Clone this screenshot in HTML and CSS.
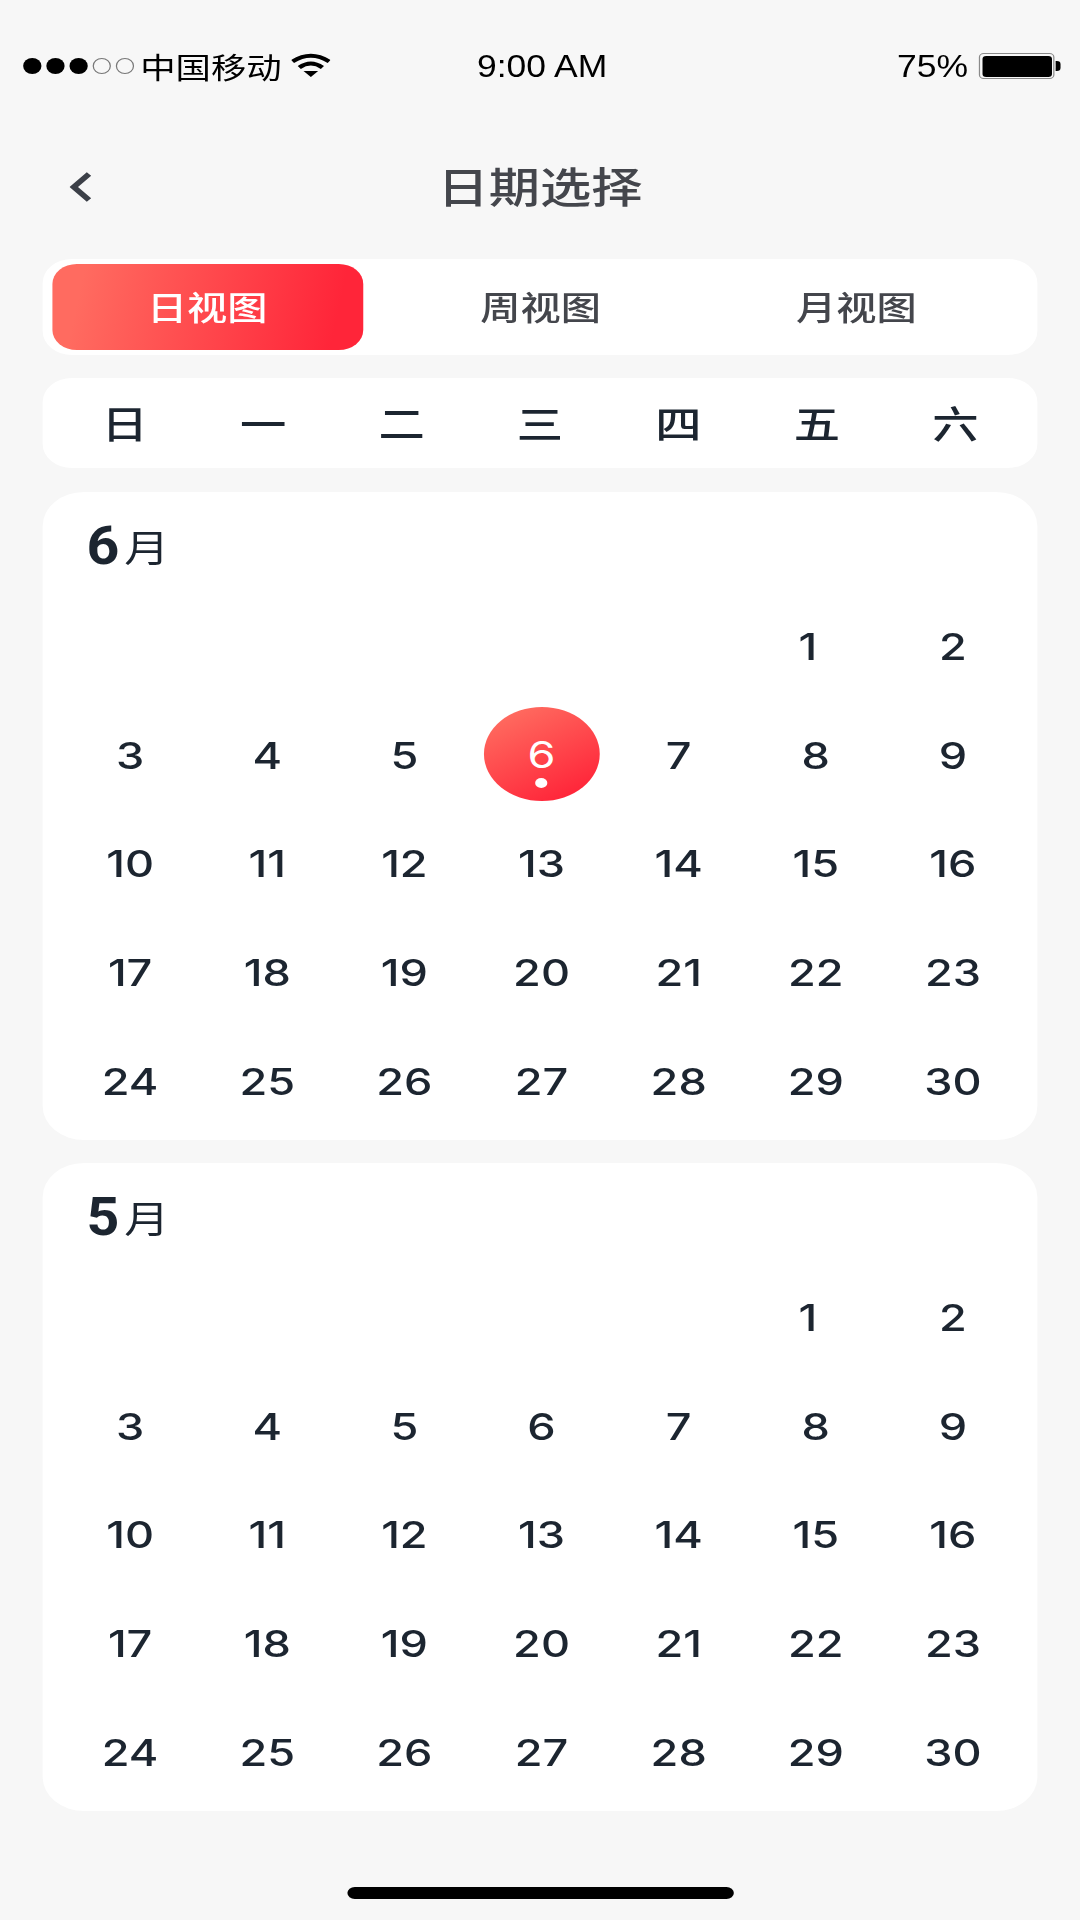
FILE: index.html
```html
<!DOCTYPE html>
<html lang="zh-CN">
<head>
  <meta charset="UTF-8">
  <meta name="viewport" content="width=device-width, initial-scale=1">
  <title>日期选择</title>
  <link rel="stylesheet" href="styles.css">
</head>
<body>
  <div class="screen">
    <div class="statusbar">
      <div class="status-left">
        <div class="signal">
          <span class="dot"></span><span class="dot"></span><span class="dot"></span><span class="dot empty"></span><span class="dot empty"></span>
        </div>
        <span class="carrier">中国移动</span>
        <svg class="wifi" viewBox="0 0 32 24">
          <path d="M1 8.5Q16 -3 31 8.5" fill="none" stroke="#000" stroke-width="4"/>
          <path d="M6.5 14.5Q16 6.5 25.5 14.5" fill="none" stroke="#000" stroke-width="4"/>
          <polygon points="10,18 22,18 16,24" fill="#000"/>
        </svg>
      </div>
      <span class="time">9:00 AM</span>
      <div class="status-right">
        <span class="percent">75%</span>
        <div class="battery"><div class="battery-fill"></div></div>
        <div class="battery-nub"></div>
      </div>
    </div>

    <div class="navbar">
      <svg class="back" viewBox="0 0 19 30">
        <polyline points="16,2 3.5,15 16,28" fill="none" stroke="#3c4048" stroke-width="5"/>
      </svg>
      <div class="page-title">日期选择</div>
    </div>

    <div class="tabs">
      <div class="tab active">日视图</div>
      <div class="tab tab-week">周视图</div>
      <div class="tab tab-month">月视图</div>
    </div>

    <div class="weekdays">
      <div>日</div><div>一</div><div>二</div><div>三</div><div>四</div><div>五</div><div>六</div>
    </div>

    <div class="month">
      <div class="month-title"><span class="month-num">6</span><span class="month-unit">月</span></div>
      <div class="days">
        <div></div><div></div><div></div><div></div><div></div>
        <div class="day day-one">1</div><div class="day">2</div>
        <div class="day">3</div><div class="day">4</div><div class="day">5</div>
        <div class="day"><span class="selected">6<i class="today-dot"></i></span></div>
        <div class="day">7</div><div class="day">8</div><div class="day">9</div>
        <div class="day">10</div><div class="day">11</div><div class="day">12</div><div class="day">13</div><div class="day">14</div><div class="day">15</div><div class="day">16</div>
        <div class="day">17</div><div class="day">18</div><div class="day">19</div><div class="day">20</div><div class="day">21</div><div class="day">22</div><div class="day">23</div>
        <div class="day">24</div><div class="day">25</div><div class="day">26</div><div class="day">27</div><div class="day">28</div><div class="day">29</div><div class="day">30</div>
      </div>
    </div>

    <div class="month">
      <div class="month-title"><span class="month-num">5</span><span class="month-unit">月</span></div>
      <div class="days">
        <div></div><div></div><div></div><div></div><div></div>
        <div class="day day-one">1</div><div class="day">2</div>
        <div class="day">3</div><div class="day">4</div><div class="day">5</div><div class="day">6</div><div class="day">7</div><div class="day">8</div><div class="day">9</div>
        <div class="day">10</div><div class="day">11</div><div class="day">12</div><div class="day">13</div><div class="day">14</div><div class="day">15</div><div class="day">16</div>
        <div class="day">17</div><div class="day">18</div><div class="day">19</div><div class="day">20</div><div class="day">21</div><div class="day">22</div><div class="day">23</div>
        <div class="day">24</div><div class="day">25</div><div class="day">26</div><div class="day">27</div><div class="day">28</div><div class="day">29</div><div class="day">30</div>
      </div>
    </div>

    <div class="home-bar"></div>
  </div>
</body>
</html>
```

FILE: styles.css
```css
html, body {
  margin: 0;
  background-color: #f7f7f7;
  overflow: hidden;
}
.screen {
  width: 886px;
  height: 1920px;
  transform: scaleX(1.219);
  transform-origin: 0 0;
  display: flex;
  flex-direction: column;
  font-family: "Noto Sans CJK SC", "Noto Sans", sans-serif;
  color: #1c2530;
}
.statusbar {
  height: 132px;
  flex: none;
  padding: 0 16px 0 19px;
  display: grid;
  grid-template-columns: 1fr auto 1fr;
  align-items: center;
  color: #000;
}
.status-left {
  display: flex;
  align-items: center;
}
.signal {
  display: flex;
  gap: 4px;
  margin-right: 5px;
}
.dot {
  width: 15px;
  height: 16px;
  border-radius: 50%;
  background-color: #000;
  box-sizing: border-box;
}
.dot.empty {
  background-color: transparent;
  border: 1.5px solid #777;
}
.carrier {
  font-size: 29px;
  line-height: 40px;
}
.wifi {
  width: 32px;
  height: 24px;
  margin-left: 8px;
  margin-top: -2px;
}
.time, .percent {
  font-family: "Liberation Sans", Arial, sans-serif;
  font-size: 32px;
  line-height: 40px;
  transform: scaleX(0.91);
}
.status-right {
  display: flex;
  align-items: center;
  justify-content: flex-end;
}
.percent {
  margin-right: 6px;
}
.battery {
  width: 62px;
  height: 26px;
  box-sizing: border-box;
  border: 1px solid #8a8a8a;
  border-radius: 4px;
  padding: 1.5px;
}
.battery-fill {
  height: 100%;
  background-color: #000;
  border-radius: 3px;
}
.battery-nub {
  width: 4px;
  height: 10px;
  background-color: #000;
  border-radius: 0 3px 3px 0;
  margin-left: 1px;
}
.navbar {
  height: 110px;
  flex: none;
  display: grid;
  grid-template-columns: 1fr auto 1fr;
  align-items: center;
  padding-left: 57px;
  padding-right: 57px;
}
.back {
  width: 19px;
  height: 30px;
}
.page-title {
  font-size: 42px;
  font-weight: 500;
  color: #44464c;
  line-height: 56px;
  margin-top: -4px;
}
.tabs {
  margin: 17px 35px 0;
  height: 96px;
  flex: none;
  box-sizing: border-box;
  padding: 5px 7.5px;
  background-color: #fff;
  border-radius: 24px;
  display: flex;
}
.tab {
  width: 255px;
  border-radius: 20px;
  display: flex;
  align-items: center;
  justify-content: center;
  font-size: 33px;
  font-weight: 500;
  color: #44464c;
  padding-bottom: 2px;
  box-sizing: border-box;
}
.tab.active {
  background: linear-gradient(100deg, #ff6b60 10%, #ff2539 90%);
  color: #fff;
}
.tab-week {
  margin-left: 18.5px;
}
.tab-month {
  margin-left: 4px;
}
.weekdays {
  margin: 23px 35px 0;
  height: 90px;
  flex: none;
  box-sizing: border-box;
  padding: 0 10.5px 3px;
  background-color: #fff;
  border-radius: 24px;
  display: grid;
  grid-template-columns: repeat(7, 1fr);
  align-items: center;
  text-align: center;
  font-size: 38px;
  font-weight: 500;
  line-height: 48px;
}
.month {
  margin: 24px 35px 0;
  flex: none;
  background-color: #fff;
  border-radius: 34px;
  box-sizing: border-box;
  height: 647.75px;
  padding: 0 13px 4px 15.5px;
}
.month + .month {
  margin-top: 23.25px;
}
.month-title {
  height: 100px;
  padding-left: 20.5px;
  box-sizing: border-box;
  padding-top: 18px;
  display: flex;
  align-items: baseline;
}
.month-num {
  font-family: Roboto, "Liberation Sans", sans-serif;
  font-size: 54px;
  font-weight: 700;
  line-height: 68px;
  transform: translateY(2px) scaleX(0.87);
  transform-origin: 0 50%;
}
.month-unit {
  font-size: 37px;
  line-height: 68px;
  margin-left: 0;
}
.days {
  display: grid;
  grid-template-columns: repeat(7, 1fr);
  grid-auto-rows: 108.75px;
}
.day {
  display: flex;
  align-items: center;
  justify-content: center;
  font-family: Inter, "Liberation Sans", sans-serif;
  font-size: 37px;
  font-weight: 500;
  color: #1c2530;
}
.day-one {
  padding-right: 13px;
}
.selected {
  position: relative;
  width: 95px;
  height: 94px;
  margin-top: -2px;
  border-radius: 50%;
  background: linear-gradient(150deg, #ff6c60 10%, #ff2338 90%);
  color: #fff;
  display: flex;
  align-items: center;
  justify-content: center;
  font-weight: 400;
}
.today-dot {
  position: absolute;
  left: 42.5px;
  bottom: 13px;
  width: 10px;
  height: 10px;
  border-radius: 50%;
  background-color: #fff;
}
.home-bar {
  margin: 76px auto 0;
  width: 317px;
  height: 12px;
  flex: none;
  border-radius: 6px;
  background-color: #000;
}
```
